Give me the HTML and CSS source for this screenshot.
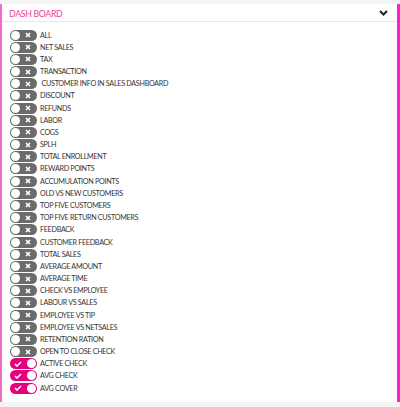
FILE: index.html
```html
<!DOCTYPE html>
<html lang="en">
<head>
<meta charset="UTF-8" />
<title>Dash Board Settings</title>
<link rel="stylesheet" href="styles.css">
</head>
<body>

<div class="panel">
  <div class="panel-head">
    <span class="panel-title">DASH BOARD</span>
    <svg class="chevron" width="9" height="6" viewBox="0 0 9 6"><path d="M1 1 L4.5 4.5 L8 1" fill="none" stroke="#222" stroke-width="2"/></svg>
  </div>
  <ul class="toggles" id="toggle-list"></ul>
</div>

<script>
  const items = [
    ['ALL', false], ['NET SALES', false], ['TAX', false], ['TRANSACTION', false],
    [' CUSTOMER INFO IN SALES DASHBOARD', false], ['DISCOUNT', false], ['REFUNDS', false],
    ['LABOR', false], ['COGS', false], ['SPLH', false], ['TOTAL ENROLLMENT', false],
    ['REWARD POINTS', false], ['ACCUMULATION POINTS', false], ['OLD VS NEW CUSTOMERS', false],
    ['TOP FIVE CUSTOMERS', false], ['TOP FIVE RETURN CUSTOMERS', false], ['FEEDBACK', false],
    ['CUSTOMER FEEDBACK', false], ['TOTAL SALES', false], ['AVERAGE AMOUNT', false],
    ['AVERAGE TIME', false], ['CHECK VS EMPLOYEE', false], ['LABOUR VS SALES', false],
    ['EMPLOYEE VS TIP', false], ['EMPLOYEE VS NETSALES', false], ['RETENTION RATION', false],
    ['OPEN TO CLOSE CHECK', false], ['ACTIVE CHECK', true], ['AVG CHECK', true], ['AVG COVER', true]
  ];

  const list = document.getElementById('toggle-list');
  const offIcon = '<svg class="mark" width="6" height="6" viewBox="0 0 6 6"><path d="M1 1 L5 5 M5 1 L1 5" stroke="#fff" stroke-width="1.6"/></svg>';
  const onIcon = '<svg class="mark" width="8" height="6" viewBox="0 0 8 6"><path d="M1 3 L3 5 L7 1" fill="none" stroke="#fff" stroke-width="1.6"/></svg>';

  items.forEach(([label, on]) => {
    const li = document.createElement('li');
    li.className = 'toggle-row';
    li.innerHTML = `
      <span class="switch ${on ? 'on' : ''}">${on ? onIcon : offIcon}<span class="knob"></span></span>
      <span class="label">${label}</span>
    `;
    list.appendChild(li);
  });

  list.addEventListener('click', e => {
    const sw = e.target.closest('.switch');
    if (!sw) return;
    const on = sw.classList.toggle('on');
    sw.querySelector('.mark').outerHTML = on ? onIcon : offIcon;
  });
</script>

</body>
</html>
```

FILE: styles.css
```css
body {
  font-family: Lato, "Open Sans", sans-serif;
  margin: 0; padding: 0;
  background: #f4f4f4;
  color: #333;
}
.panel {
  margin-top: 4px;
  height: 398px;
  background: #fff;
  border-left: 2px solid #f06cc6;
  border-right: 3px solid #ff1fc8;
  box-sizing: border-box;
}
.panel-head {
  display: flex;
  justify-content: space-between;
  align-items: center;
  height: 17px;
  padding: 0 9px 0 7px;
  border-bottom: 1px solid #e6e6e6;
}
.panel-title {
  color: #ec3f97;
  font-size: 8.8px;
  letter-spacing: -0.35px;
  margin-top: 1px;
}
.chevron {
  margin-top: 1px;
}
.toggles {
  list-style: none;
  margin: 0;
  padding: 7px 0 0 8px;
}
.toggle-row {
  display: flex;
  align-items: center;
  height: 12.18px;
}
.switch {
  position: relative;
  display: inline-flex;
  align-items: center;
  width: 27px;
  height: 11px;
  border-radius: 6px;
  background: #6b6b6b;
  box-sizing: border-box;
  cursor: pointer;
  flex-shrink: 0;
}
.switch .knob {
  position: absolute;
  left: 1px;
  top: 1px;
  width: 9px;
  height: 9px;
  border-radius: 50%;
  background: #fff;
}
.switch .mark {
  position: absolute;
  left: 15px;
  top: 2.5px;
}
.switch.on {
  background: #e5007e;
}
.switch.on .knob {
  left: 17px;
}
.switch.on .mark {
  left: 4px;
}
.label {
  margin-left: 3px;
  font-size: 7.2px;
  letter-spacing: -0.3px;
  color: #333;
  white-space: pre;
}
```
